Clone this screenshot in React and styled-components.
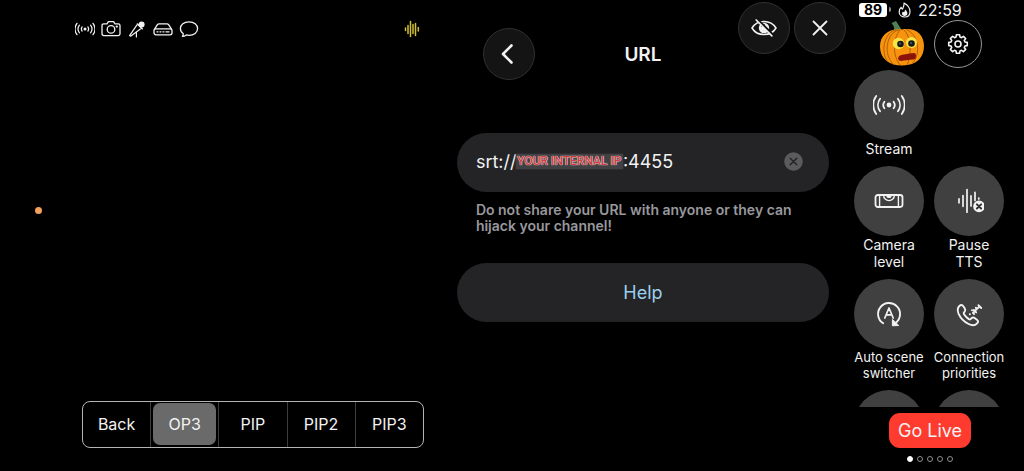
import React, { useState } from "react";
import styled, { createGlobalStyle } from "styled-components";

const GlobalStyle = createGlobalStyle`
  * {
    box-sizing: border-box;
  }
  body {
    margin: 0;
    background: #000;
    color: #f2f2f2;
    font-family: Inter, "Liberation Sans", sans-serif;
  }
  button,
  input {
    margin: 0;
    padding: 0;
    border: none;
    background: none;
    color: inherit;
    font: inherit;
  }
  button {
    cursor: pointer;
  }
  svg {
    display: block;
    flex: none;
  }
`;

const Screen = styled.div`
  display: grid;
  grid-template-columns: minmax(0, 9fr) minmax(0, 8fr) 178px;
  height: 100vh;
  overflow: hidden;
`;

const Preview = styled.main`
  display: flex;
  flex-direction: column;
  padding: 19px 24px 23px 0;
`;

const StatusIcons = styled.div`
  display: flex;
  gap: 6px;
  padding: 0 2px 0 75px;
`;

const PushRight = styled.div`
  margin-left: auto;
`;

const Stage = styled.div`
  flex: 1;
  padding: 168px 0 0 35px;
`;

const RecordingDot = styled.div`
  width: 7px;
  height: 7px;
  border-radius: 50%;
  background: #f2a05c;
`;

const Segmented = styled.div`
  display: flex;
  height: 47px;
  margin-left: 82px;
  border: 1px solid #b4b4b4;
  border-radius: 8px;
`;

const SegmentCell = styled.div`
  display: flex;
  flex: 1;
  padding: 1px 2px 2px;
  & + & {
    border-left: 1px solid #3c3c3c;
  }
`;

const Segment = styled.button`
  flex: 1;
  border-radius: 7px;
  font-size: 16px;
  background: ${(props) => (props.$active ? "#6a6a6a" : "transparent")};
`;

const Settings = styled.section`
  position: relative;
  padding: 28px 17px 0 9px;
`;

const Floating = styled.div`
  position: absolute;
  top: 2px;
  right: 0;
  display: flex;
  gap: 4px;
`;

const RoundButton = styled.button`
  display: flex;
  justify-content: center;
  align-items: center;
  width: 52px;
  height: 52px;
  border: 1px solid #303030;
  border-radius: 50%;
  background: #141414;
`;

const Header = styled.header`
  display: grid;
  grid-template-columns: 52px 1fr 52px;
  align-items: center;
  padding: 0 26px;
`;

const Title = styled.h1`
  margin: 0;
  text-align: center;
  font-size: 19px;
  font-weight: 600;
`;

const UrlField = styled.div`
  display: flex;
  align-items: center;
  height: 59px;
  margin-top: 53px;
  padding: 0 26px 2px 19px;
  border-radius: 30px;
  background: #242426;
  font-size: 18px;
`;

const UrlPart = styled.input`
  flex: ${(props) => (props.$grow ? "1" : "none")};
  width: 40px;
  min-width: 0;
  outline: none;
`;

const Redacted = styled.span`
  width: 107px;
  color: #d23c3c;
  font-family: Roboto, sans-serif;
  font-size: 12px;
  font-weight: 500;
  line-height: 15px;
  white-space: nowrap;
  text-align: center;
  background: #414144;
  box-shadow: 0 0 2px #414144;
  text-shadow: 0 0 1px #fff, 0 0 1px #fff;
`;

const Hint = styled.p`
  margin: 10px 0 0;
  padding: 0 19px;
  color: #98989d;
  font-size: 14px;
  font-weight: 600;
  line-height: 16px;
`;

const HelpButton = styled.button`
  width: 100%;
  height: 59px;
  margin-top: 29px;
  border-radius: 30px;
  background: #242426;
  color: #9bd0ec;
  font-size: 18px;
`;

const Controls = styled.aside`
  display: flex;
  flex-direction: column;
  min-height: 0;
  padding: 1px 15px 0 3px;
`;

const StatusBar = styled.div`
  display: flex;
  align-items: center;
  height: 17px;
  padding-left: 10px;
  font-size: 16px;
`;

const Battery = styled.span`
  width: 28px;
  border-radius: 3px;
  background: #fff;
  color: #000;
  text-align: center;
  font-size: 14px;
  font-weight: 700;
  line-height: 14px;
`;

const BatteryTip = styled.span`
  width: 2px;
  height: 5px;
  margin: 0 7px 0 2px;
  border-radius: 0 2px 2px 0;
  background: #8a8a8a;
`;

const Clock = styled.time`
  margin-left: 7px;
`;

const TopRow = styled.div`
  display: flex;
  gap: 10px;
  padding: 2px 0 2px 31px;
`;

const GearButton = styled.button`
  display: flex;
  justify-content: center;
  align-items: center;
  width: 48px;
  height: 48px;
  border: 1px solid #969696;
  border-radius: 50%;
`;

const QuickList = styled.div`
  display: grid;
  flex: 1;
  grid-template-columns: 80px 80px;
  align-content: start;
  row-gap: 9px;
  min-height: 0;
  overflow: hidden;
`;

const QuickButton = styled.button`
  display: flex;
  flex-direction: column;
  align-items: center;
  grid-column: ${(props) => (props.$ownRow ? "span 2" : "auto")};
  width: 80px;
  font-size: ${(props) => (props.$small ? "13px" : "14px")};
  line-height: ${(props) => (props.$small ? "16px" : "17px")};
  white-space: pre;
`;

const QuickCircle = styled.span`
  display: flex;
  justify-content: center;
  align-items: center;
  width: 70px;
  height: 70px;
  border-radius: 50%;
  background: #404040;
`;

const Footer = styled.footer`
  display: flex;
  flex-direction: column;
  align-items: center;
  gap: 8px;
  padding: 6px 0 9px 2px;
`;

const GoLive = styled.button`
  width: 82px;
  height: 35px;
  border-radius: 11px;
  background: #ff3b30;
  font-size: 18px;
`;

const Pages = styled.div`
  display: flex;
  gap: 4px;
`;

const PageDot = styled.span`
  width: 6px;
  height: 6px;
  border: 1px solid ${(props) => (props.$active ? "#fff" : "#8e8e8e")};
  border-radius: 50%;
  background: ${(props) => (props.$active ? "#fff" : "transparent")};
`;

const Icon = ({ w = 20, h = 20, box = "0 0 20 20", sw = 1.3, children }) => (
  <svg
    width={w}
    height={h}
    viewBox={box}
    fill="none"
    stroke="currentColor"
    strokeWidth={sw}
    strokeLinecap="round"
    strokeLinejoin="round"
    aria-hidden="true"
  >
    {children}
  </svg>
);

const Broadcast = ({ size = 20, sw = 1.3 }) => (
  <Icon w={size} h={size} box="0 0 32 32" sw={sw}>
    <circle cx="16" cy="16" r="2.4" fill="currentColor" stroke="none" />
    <path d="M11.4 12.7a5.6 5.6 0 0 0 0 6.600M7.100 9.800a10.200 10.200 0 0 0 0 12.400M3.200 7a15.200 15.200 0 0 0 0 18" />
    <path d="M20.600 12.700a5.600 5.600 0 0 1 0 6.600M24.900 9.800a10.200 10.200 0 0 1 0 12.400M28.800 7a15.200 15.200 0 0 1 0 18" />
  </Icon>
);

const Camera = () => (
  <Icon>
    <path d="M2.8 4.8h3.2l1.4-2.200h5.200L14 4.800h3.200q1.800 0 1.800 1.800v8.200q0 1.800-1.800 1.800H2.800Q1 16.600 1 14.800V6.600q0-1.800 1.800-1.800z" />
    <circle cx="10" cy="10.4" r="3.8" />
    <circle cx="15.8" cy="7.6" r="0.5" fill="currentColor" />
  </Icon>
);

const Mic = () => (
  <Icon sw={1.200}>
    <circle cx="14.600" cy="5.400" r="3" fill="currentColor" stroke="none" />
    <path d="M10.400 5l4.800 4.800" strokeWidth="1.600" />
    <path d="M9.800 6.200L2.600 16.600l1 .6L13.400 10" />
    <path d="M9.400 13v5" />
  </Icon>
);

const Drive = () => (
  <Icon>
    <path d="M1.400 10.400L4.400 5.600Q5 4.800 6 4.800h8q1 0 1.600.8l3 4.800" />
    <rect x="1" y="9.800" width="18" height="6" rx="2" />
    <path d="M4 12.800h1M7 12.800h1M10 12.800h1M13 12.800h3" />
  </Icon>
);

const Bubble = () => (
  <Icon>
    <path d="M10 2.800c5 0 8.600 2.900 8.600 6.800s-3.600 6.700-8.600 6.700c-.9 0-1.800-.1-2.600-.4-1.200.9-2.600 1.500-4 1.500.6-.8.9-1.700.9-2.600-1.800-1.200-2.900-3-2.900-5.200 0-3.900 3.600-6.800 8.600-6.800z" />
  </Icon>
);

const YellowWave = () => (
  <Icon sw={1.500}>
    <path d="M3.500 9v2.500M6 6.500v8M8.500 2.500v15M11 5.500v9M13.500 4.500v12M16.300 8.500v3.500" stroke="#cfc036" />
  </Icon>
);

const TtsWave = () => (
  <Icon w={30} h={30} box="0 0 30 30" sw={1.700}>
    <path d="M5 12.800v4M9 9.500v10.800M13 3.600v22.600M17 9.800v10.200M21 6.400v8M24.800 12v1" />
    <circle cx="25" cy="20.400" r="5" fill="currentColor" stroke="#404040" strokeWidth="1" />
    <circle cx="25" cy="20.400" r="5" fill="currentColor" />
    <path d="M22.900 18.300l4.200 4.200M27.100 18.300l-4.200 4.200" stroke="#303030" strokeWidth="1.900" />
  </Icon>
);

const Level = () => (
  <Icon w={30} h={14} box="0 0 30 14" sw={1.800}>
    <rect x="1.500" y="1" width="27" height="12" rx="2.400" />
    <path d="M5.600 1v12M24.400 1v12M9.600 1.200a5.400 5.400 0 0 0 10.800 0" strokeWidth="1.400" />
    <path d="M12.200 1.200a2.800 2.800 0 0 0 5.600 0z" fill="currentColor" stroke="none" />
  </Icon>
);

const AutoScene = () => (
  <Icon w={28} h={28} box="0 0 28 28" sw={1.900}>
    <path d="M8.200 23.300a11 11 0 1 1 12.600-.6" />
    <path d="M17.400 19.800v6l6-.3z" fill="currentColor" strokeWidth="1" />
    <path d="M9.800 18L14 8l4.200 10M11.300 14.800h5.400" strokeWidth="1.700" />
  </Icon>
);

const Phone = () => (
  <Icon w={28} h={28} box="0 0 28 28" sw={1.900}>
    <path d="M4.400 6c1.500-1.500 2.900-1.300 3.900.2l1.500 2.400c.8 1.200.7 2-.1 3l-.7.9c-.5.5-.5 1 0 1.800 1.300 2 2.800 3.500 4.800 4.800.7.500 1.300.5 1.800 0l.9-.8c1-.9 2-1 3.100-.2l2.300 1.600c1.500 1.100 1.600 2.300.2 3.700-2.300 2.500-5.200 2.300-8.500.6-4.500-2.300-7.900-5.700-10-10.200-1.300-3-1.300-5.700.8-7.800z" />
    <path d="M14.800 14.200h.1M18.800 10l2.400 2.400M23.400 5.200l2.800 2.800M17 10.200h.1M20.800 7.800h.1M19 14h.1M18 13l2-2M21 9.800l3.600-3.400" strokeWidth="1.900" />
  </Icon>
);

const Flame = () => (
  <Icon w={13} h={16} box="0 0 13 16" sw={1.200}>
    <path d="M6 1c3.600 2 6 5 6 8.400 0 3.400-2.200 5.600-5.300 5.600S1.200 13 1.200 10c0-2 .8-3.700 2-4.700.2 1.200.7 1.700 1.300 1.800C5.300 5.400 6.600 3.300 6 1z" />
    <path d="M7 7.400c1.700 1.400 2.400 2.700 2.400 4 0 1.600-1.100 2.500-2.700 2.500S4 13 4 11.600c0-.9.400-1.600 1-2.100.5.700.9.8 1.300.6.400-.8.700-1.700.7-2.700z" fill="currentColor" stroke="none" />
  </Icon>
);

const gearPath = () => {
  const teeth = 8;
  const points = [];
  for (let i = 0; i < teeth; i++) {
    [
      [-0.28, 7.2],
      [-0.17, 9.4],
      [0.17, 9.4],
      [0.28, 7.2],
    ].forEach(([a, r]) => {
      const t = (i * Math.PI * 2) / teeth + a;
      points.push(`${(11 + r * Math.sin(t)).toFixed(2)} ${(11 - r * Math.cos(t)).toFixed(2)}`);
    });
  }
  return `M${points.join("L")}Z`;
};

const Gear = () => (
  <Icon w={22} h={22} box="0 0 22 22" sw={1.600}>
    <path d={gearPath()} />
    <circle cx="11" cy="11" r="3" />
  </Icon>
);

const EyeOff = () => (
  <Icon w={28} h={20} box="0 0 28 20" sw={1.500}>
    <path d="M2 10c2.600-4.400 7-6.600 12-6.600s9.400 2.200 12 6.600c-2.600 4.400-7 6.600-12 6.600S4.600 14.400 2 10z" />
    <circle cx="14" cy="10" r="5.200" fill="currentColor" stroke="none" />
    <path d="M11.500 8.500a3 3 0 0 1 3-1.800" stroke="#141414" strokeWidth="1" />
    <path d="M7.600 1.600l15.600 15.600" stroke="#141414" strokeWidth="2.400" />
    <path d="M6.200 2l15.600 15.800" strokeWidth="1.700" />
  </Icon>
);

const Pumpkin = () => (
  <svg width="44" height="46" viewBox="0 0 44 46" aria-hidden="true">
    <path d="M11.500 3l4.500-2 4.500 7 .8 3-7.500-.4c1-2.500.2-4.500-2.300-7.600z" fill="#4e8054" />
    <path d="M22 9.500C36 7 44 15 44 26c0 11-7 19.500-21.500 19.500S0 38 0 26.500 9 8 22 9.500z" fill="#f8930e" />
    <g fill="none" stroke="#a65a08" strokeWidth="0.900">
      <path d="M19 10C7 12 2 34 14 45M20 10c-8 10-7 26 0 35M24 10c7 6 8 26 3 35M26 9.500c12 4 16 24 6 34M16 10C6 11-1 30 8 42" />
    </g>
    <circle cx="18.500" cy="23.500" r="5.800" fill="#f7e548" />
    <circle cx="31.500" cy="22.500" r="5.500" fill="#f7e548" />
    <circle cx="20.500" cy="24" r="3.300" fill="#16181a" />
    <circle cx="31.500" cy="23.500" r="3.300" fill="#16181a" />
    <circle cx="20" cy="23.500" r="0.900" fill="#567" />
    <circle cx="31" cy="23" r="0.900" fill="#567" />
    <path d="M20 35.500q4-1.500 14-2.500 2 0 2 3t-2.500 3.500q-8 .5-12 1.500-3 0-3.500-2.500 0-2 2-3z" fill="#8c1309" />
  </svg>
);

const scenes = ["Back", "OP3", "PIP", "PIP2", "PIP3"];

const quickButtons = [
  { label: "Stream", icon: <Broadcast size={32} sw={1.800} />, ownRow: true },
  { label: "Camera\nlevel", icon: <Level /> },
  { label: "Pause\nTTS", icon: <TtsWave /> },
  { label: "Auto scene\nswitcher", icon: <AutoScene />, small: true },
  { label: "Connection\npriorities", icon: <Phone />, small: true },
  { label: "", icon: null },
  { label: "", icon: null },
];

const App = () => {
  const [scene, setScene] = useState("OP3");
  const [scheme, setScheme] = useState("srt://");
  const [port, setPort] = useState(":4455");

  return (
    <>
      <GlobalStyle />
      <Screen>
        <Preview>
          <StatusIcons>
            <Broadcast sw={2} />
            <Camera />
            <Mic />
            <Drive />
            <Bubble />
            <PushRight>
              <YellowWave />
            </PushRight>
          </StatusIcons>
          <Stage>
            <RecordingDot />
          </Stage>
          <Segmented>
            {scenes.map((name) => (
              <SegmentCell key={name}>
                <Segment $active={name === scene} onClick={() => setScene(name)}>
                  {name}
                </Segment>
              </SegmentCell>
            ))}
          </Segmented>
        </Preview>

        <Settings>
          <Header>
            <RoundButton aria-label="Back">
              <Icon w={16} h={20} box="0 0 16 20" sw={2.600}>
                <path d="M10.500 1.500L2 10l8.500 8.500" />
              </Icon>
            </RoundButton>
            <Title>URL</Title>
          </Header>
          <Floating>
            <RoundButton aria-label="Hide">
              <EyeOff />
            </RoundButton>
            <RoundButton aria-label="Close">
              <Icon w={16} h={16} box="0 0 16 16" sw={1.800}>
                <path d="M1.500 1.500l13 13M14.500 1.500l-13 13" />
              </Icon>
            </RoundButton>
          </Floating>
          <UrlField>
            <UrlPart aria-label="Scheme" value={scheme} onChange={(e) => setScheme(e.target.value)} />
            <Redacted>YOUR INTERNAL IP</Redacted>
            <UrlPart $grow aria-label="Port" value={port} onChange={(e) => setPort(e.target.value)} />
            <button aria-label="Clear" onClick={() => setPort("")}>
              <Icon w={19} h={19} box="0 0 19 19" sw={1.500}>
                <circle cx="9.500" cy="9.500" r="9.300" fill="#5b5b5e" stroke="none" />
                <path d="M6.200 6.200l6.600 6.600M12.800 6.200l-6.600 6.600" stroke="#242426" />
              </Icon>
            </button>
          </UrlField>
          <Hint>Do not share your URL with anyone or they can hijack your channel!</Hint>
          <HelpButton>Help</HelpButton>
        </Settings>

        <Controls>
          <StatusBar>
            <Battery>89</Battery>
            <BatteryTip />
            <Flame />
            <Clock>22:59</Clock>
          </StatusBar>
          <TopRow>
            <Pumpkin />
            <GearButton aria-label="Settings">
              <Gear />
            </GearButton>
          </TopRow>
          <QuickList>
            {quickButtons.map((item, i) => (
              <QuickButton key={i} $ownRow={item.ownRow} $small={item.small}>
                <QuickCircle>{item.icon}</QuickCircle>
                {item.label}
              </QuickButton>
            ))}
          </QuickList>
          <Footer>
            <GoLive>Go Live</GoLive>
            <Pages>
              {[0, 1, 2, 3, 4].map((page) => (
                <PageDot key={page} $active={page === 0} />
              ))}
            </Pages>
          </Footer>
        </Controls>
      </Screen>
    </>
  );
};

export default App;
